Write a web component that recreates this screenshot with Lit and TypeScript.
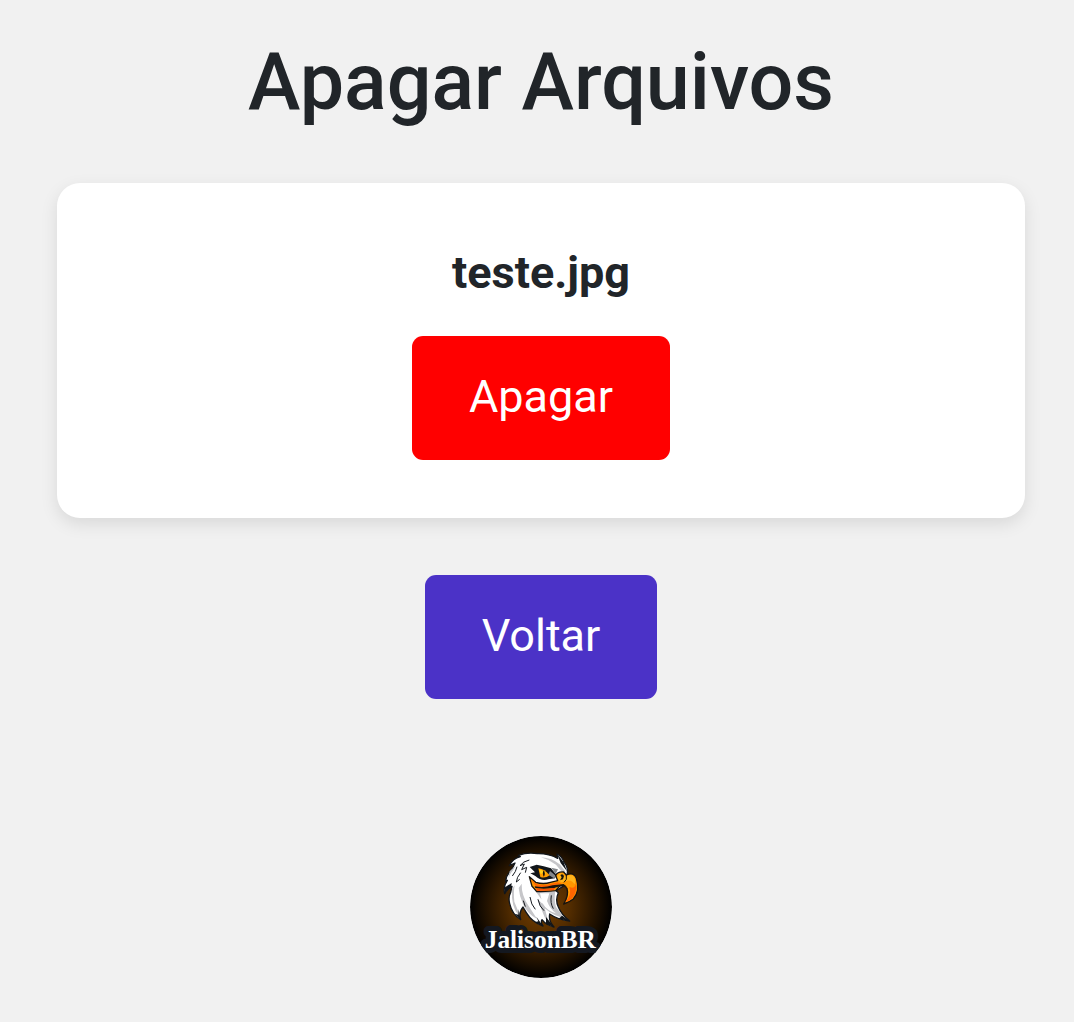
import { LitElement, html, css } from "lit";
import { customElement, property } from "lit/decorators.js";

@customElement("eagle-logo")
class EagleLogo extends LitElement {
  static styles = css`
    :host {
      display: block;
      width: 142px;
    }
    .badge {
      display: block;
      width: 100%;
      border-radius: 50%;
    }
    .name {
      font-family: "Liberation Serif", serif;
      font-weight: 700;
      font-size: 76px;
      text-anchor: middle;
      fill: #fff;
      stroke: #141820;
      stroke-width: 30px;
      stroke-linejoin: round;
      paint-order: stroke;
    }
  `;

  render() {
    return html`
      <svg class="badge" viewBox="12 12 426 426" role="img" aria-label="JalisonBR">
        <defs>
          <radialGradient id="glow" cx="225" cy="225" r="213" gradientUnits="userSpaceOnUse">
            <stop offset="0" stop-color="#743e00" />
            <stop offset="0.4" stop-color="#542d00" />
            <stop offset="0.75" stop-color="#241300" />
            <stop offset="1" stop-color="#000" />
          </radialGradient>
        </defs>
        <circle cx="225" cy="225" r="213" fill="url(#glow)" />

        <!-- head and neck feathers -->
        <path
          d="M130 101 Q140 80 163 74 L157 70 Q185 60 214 65 Q248 64 275 79 L273 66 Q289 74 294 91 Q306 104 304 123 L300 158 L270 176 L277 182 Q267 204 277 225 Q286 248 311 267 Q277 264 251 246 Q247 267 264 285 Q240 279 228 263 Q223 272 231 282 Q198 271 181 242 L171 225 Q158 240 164 263 Q138 247 131 215 Q126 195 134 181 L138 163 Q124 169 116 185 Q111 163 124 145 L119 148 Q121 128 136 115 L147 93 Z"
          fill="#fff" stroke="#12161b" stroke-width="4" stroke-linejoin="round"
        />
        <path
          d="M225 76 Q259 78 281 97 L299 119 L286 118 L270 98 Q250 83 225 76 Z M131 118 L150 100 L141 115 Q128 131 126 146 Z M138 172 L146 160 Q142 180 145 209 L158 241 L158 250 Q135 225 138 172 Z M158 168 L167 155 Q166 190 188 222 L214 262 Q184 245 171 216 Q160 192 158 168 Z"
          fill="#c6c6c9"
        />
        <path
          d="M212 180 L268 178 Q263 203 270 225 L295 258 Q262 252 236 229 L247 268 Q225 249 216 222 L200 190 Z"
          fill="#c4c4c7"
        />
        <path
          d="M187 134 L193 157 L213 184 L238 218 Q225 214 214 201 L239 263 Q211 234 201 203 L195 190 L201 237 Q184 215 182 185 Q177 156 187 134 Z M222 184 L250 184 L243 207 Q252 231 270 244 Q243 237 229 213 Z"
          fill="#fff"
        />
        <path
          d="M190 84 Q171 88 162 101 L175 96 L167 113 L182 106 L178 122 M153 104 Q150 119 139 132 M164 122 Q152 136 151 150 L161 142 M192 195 Q195 218 208 232 M216 202 Q220 224 234 236 M256 190 Q252 214 262 230 M172 206 L178 224"
          fill="none" stroke="#14181d" stroke-width="3" stroke-linejoin="round"
        />
        <path
          d="M158 232 L164 263 L146 245 L157 248 Z M211 254 L231 282 L206 271 L217 268 Z M240 255 L264 285 L240 276 Z M288 251 L313 268 L278 260 Z M117 166 L137 153 L136 163 L116 185 Z M273 65 L293 91 L303 118 L284 93 Z"
          fill="#12161b"
        />

        <!-- brow and eye -->
        <path
          d="M191 105 L212 98 L233 103 L255 109 L271 128 L267 139 L247 142 Q226 148 208 132 L193 124 L207 121 Z"
          fill="#12161b"
        />
        <path
          d="M252 117 L271 133 L264 139 L247 128 Z M256 107 L276 112 L269 126 Z"
          fill="#85888c"
        />
        <path d="M217 109 Q236 111 251 130 Q238 140 223 135 Z" fill="#ff9d00" />
        <path d="M220 112 Q234 116 242 124 L223 125 Z" fill="#ffd11c" />
        <path d="M233 115 Q240 126 233 134 Q228 123 233 115 Z" fill="#15110b" />

        <!-- beak -->
        <path
          d="M190 134 L209 151 Q233 158 253 151 L275 146 L269 130 Q276 118 293 120 L301 129 Q323 118 331 139 Q343 177 322 201 Q309 211 293 216 Q309 190 303 169 Q294 157 280 163 L269 176 Q235 179 212 179 Q204 169 198 163 Z"
          fill="#ff9700" stroke="#16130f" stroke-width="4" stroke-linejoin="round"
        />
        <path
          d="M194 141 L210 155 Q232 163 255 155 L276 151 L287 155 Q267 157 259 164 L214 169 Z M330 155 Q334 186 313 204 L298 211 Q318 187 310 164 Q325 173 330 155 Z"
          fill="#ff6500"
        />
        <path
          d="M274 132 Q281 121 291 126 L299 134 Q316 123 325 136 Q330 148 326 157 Q317 142 302 146 L287 151 Q274 145 274 132 Z"
          fill="#ffb51c"
        />
        <path d="M206 163 Q234 168 260 160 L293 156 L303 164 L283 162 L265 168 Q230 173 208 168 Z" fill="#19140e" />
        <path d="M209 169 Q237 174 261 168 L267 168 L263 175 L214 177 Z" fill="#f65209" />
        <path d="M283 129 Q290 123 294 132 L291 142 L282 145 L287 136 Z" fill="#16120c" />
        <path d="M301 129 L301 142 L294 151" fill="none" stroke="#16120c" stroke-width="3" />

        <text class="name" x="223" y="347">JalisonBR</text>
      </svg>
    `;
  }
}

@customElement("app-root")
class AppRoot extends LitElement {
  @property({ attribute: false }) files: string[] = ["teste.jpg"];

  static styles = css`
    :host {
      display: block;
      min-height: 100vh;
      box-sizing: border-box;
      padding: 36px 49px 44px 57px;
      background: #f1f1f1;
      color: #212529;
      font-family: Roboto, sans-serif;
      font-size: 45px;
      line-height: 66px;
    }
    .page {
      display: flex;
      flex-direction: column;
      align-items: center;
    }
    .title {
      margin: 0 0 54px;
      font-size: 79px;
      line-height: 93px;
      font-weight: 500;
      text-align: center;
    }
    .card {
      align-self: stretch;
      box-sizing: border-box;
      display: flex;
      flex-direction: column;
      align-items: center;
      margin-bottom: 57px;
      padding: 57px 57px 58px;
      border-radius: 23px;
      background: #fff;
      box-shadow: 0 6px 17px rgba(0, 0, 0, 0.1);
    }
    .file {
      margin: 0 0 30px;
      font-size: inherit;
      font-weight: 700;
    }
    .button {
      display: block;
      border: 0;
      border-radius: 11px;
      padding: 28px 57px 30px;
      color: #fff;
      font: inherit;
      text-decoration: none;
      cursor: pointer;
    }
    .danger {
      background: #f00;
    }
    .back {
      background: #4b32c7;
    }
    .footer {
      margin-top: 137px;
    }
  `;

  render() {
    return html`
      <main class="page">
        <h1 class="title">Apagar Arquivos</h1>
        ${this.files.map(
          (name) => html`
            <section class="card">
              <h2 class="file">${name}</h2>
              <button class="button danger" type="button">Apagar</button>
            </section>
          `
        )}
        <a class="button back" href="#">Voltar</a>
        <footer class="footer"><eagle-logo></eagle-logo></footer>
      </main>
    `;
  }
}
